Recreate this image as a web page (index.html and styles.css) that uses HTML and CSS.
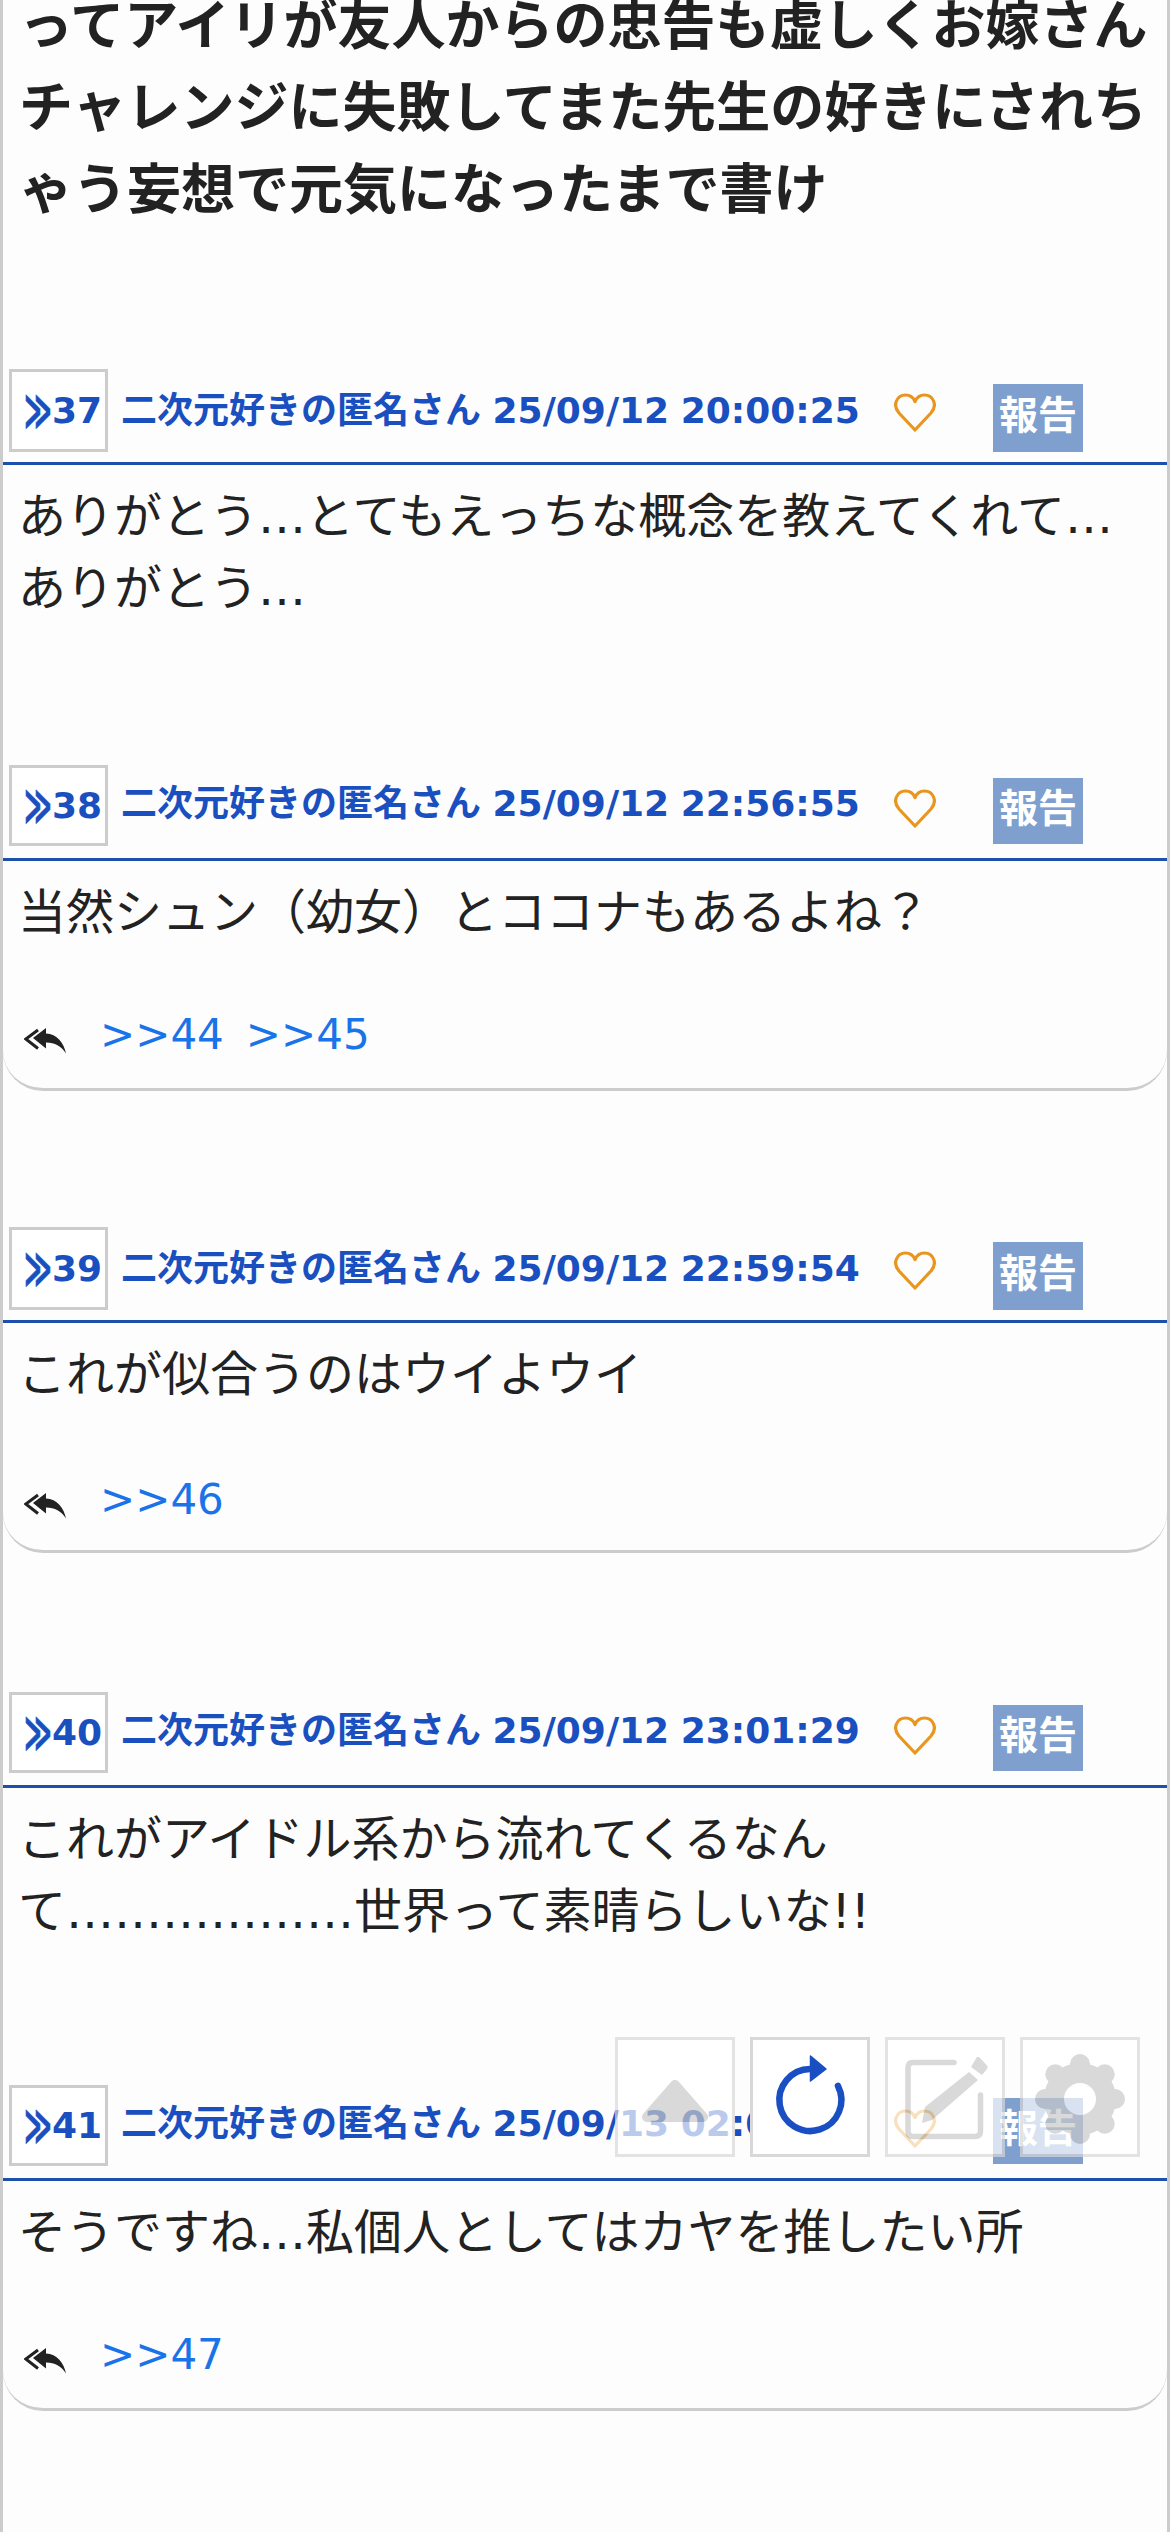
FILE: index.html
```html
<!DOCTYPE html>
<html lang="ja">
<head>
<meta charset="utf-8">
<title>スレッド</title>
<link rel="stylesheet" href="styles.css">
</head>
<body>
<svg class="defs" width="0" height="0" aria-hidden="true">
  <defs>
    <symbol id="heart" viewBox="0 0 42 39">
      <path d="M21 37 L5 20 C-2 12 3 2 11.500 2 C16 2 19.500 5 21 8.500 C22.500 5 26 2 30.500 2 C39 2 44 12 37 20 Z" fill="none" stroke="#e8961e" stroke-width="3.200" stroke-linejoin="round"/>
    </symbol>
    <symbol id="reply" viewBox="0 0 42 26">
      <path d="M14 2 L1.800 11 L14 20.500" fill="none" stroke="#222" stroke-width="3"/>
      <path d="M9 10 L22 0 L22 5.500 C33 6 40 15 42 25.500 C37 18 31 14.500 22 14.500 L22 20.500 Z" fill="#222"/>
    </symbol>
  </defs>
</svg>
<main class="thread">
  <h1 class="lead">ってアイリが友人からの忠告も虚しくお嫁さんチャレンジに失敗してまた先生の好きにされちゃう妄想で元気になったまで書け</h1>

  <article class="post post-37">
    <header class="post-head">
      <a class="num"><span class="mark">≫</span>37</a>
      <span class="meta">二次元好きの匿名さん 25/09/12 20:00:25</span>
      <svg class="heart"><use href="#heart"/></svg>
      <a class="report">報告</a>
    </header>
    <p class="body">ありがとう…とてもえっちな概念を教えてくれて…<br>ありがとう…</p>
  </article>

  <article class="post post-38 has-replies">
    <header class="post-head compact">
      <a class="num"><span class="mark">≫</span>38</a>
      <span class="meta">二次元好きの匿名さん 25/09/12 22:56:55</span>
      <svg class="heart"><use href="#heart"/></svg>
      <a class="report">報告</a>
    </header>
    <p class="body">当然シュン（幼女）とココナもあるよね？</p>
    <div class="replies">
      <svg class="reply-icon"><use href="#reply"/></svg>
      <a class="reply-link">&gt;&gt;44</a>
      <a class="reply-link">&gt;&gt;45</a>
    </div>
  </article>

  <article class="post post-39 has-replies">
    <header class="post-head">
      <a class="num"><span class="mark">≫</span>39</a>
      <span class="meta">二次元好きの匿名さん 25/09/12 22:59:54</span>
      <svg class="heart"><use href="#heart"/></svg>
      <a class="report">報告</a>
    </header>
    <p class="body">これが似合うのはウイよウイ</p>
    <div class="replies">
      <svg class="reply-icon"><use href="#reply"/></svg>
      <a class="reply-link">&gt;&gt;46</a>
    </div>
  </article>

  <article class="post post-40">
    <header class="post-head compact">
      <a class="num"><span class="mark">≫</span>40</a>
      <span class="meta">二次元好きの匿名さん 25/09/12 23:01:29</span>
      <svg class="heart"><use href="#heart"/></svg>
      <a class="report">報告</a>
    </header>
    <p class="body">これがアイドル系から流れてくるなん<br>て………………世界って素晴らしいな!!</p>
  </article>

  <article class="post post-41 has-replies">
    <header class="post-head compact">
      <a class="num"><span class="mark">≫</span>41</a>
      <span class="meta">二次元好きの匿名さん 25/09/13 02:00:41</span>
      <svg class="heart"><use href="#heart"/></svg>
      <a class="report">報告</a>
    </header>
    <p class="body">そうですね…私個人としてはカヤを推したい所</p>
    <div class="replies">
      <svg class="reply-icon"><use href="#reply"/></svg>
      <a class="reply-link">&gt;&gt;47</a>
    </div>
  </article>
</main>

<nav class="tools">
  <button class="tool dim" aria-label="上へ">
    <svg viewBox="0 0 114 114" class="tool-icon"><path d="M57 45 L29 77 L85 77 Z" fill="#c9c9c9" stroke="#c9c9c9" stroke-width="10" stroke-linejoin="round"/></svg>
  </button>
  <button class="tool" aria-label="更新">
    <svg viewBox="0 0 114 114" class="tool-icon">
      <path d="M85 46 A31 31 0 1 1 57 29" fill="none" stroke="#1a4fc4" stroke-width="6.500" stroke-linecap="round"/>
      <path d="M57.500 16 L73 29 L57.500 41 Z" fill="#1a4fc4" stroke="#1a4fc4" stroke-width="1.500" stroke-linejoin="round"/>
    </svg>
  </button>
  <button class="tool dim" aria-label="書き込み">
    <svg viewBox="0 0 114 114" class="tool-icon">
      <path d="M66 22.500 L25 22.500 Q20 22.500 20 28 L20 91 Q20 96.500 25 96.500 L87 96.500 Q92.500 96.500 92.500 91 L92.500 55" fill="none" stroke="#c9c9c9" stroke-width="5.500" stroke-linecap="round"/>
      <path d="M34 83 L37 67 L81 32 L90 40 L44 80 Z" fill="#c9c9c9"/>
      <path d="M83 27 L88.600 17.500 Q90 16 92 18 L99 25.500 Q100.500 27 99 29 L94 35 Z" fill="#c9c9c9"/>
    </svg>
  </button>
  <button class="tool dim" aria-label="設定">
    <svg viewBox="0 0 114 114" class="tool-icon">
      <circle cx="57" cy="59" r="26" fill="none" stroke="#c9c9c9" stroke-width="20"/>
      <g fill="#c9c9c9">
        <circle cx="57" cy="24" r="10"/>
        <circle cx="57" cy="94" r="10"/>
        <circle cx="22" cy="59" r="10"/>
        <circle cx="92" cy="59" r="10"/>
        <circle cx="32.300" cy="34.300" r="10"/>
        <circle cx="81.700" cy="34.300" r="10"/>
        <circle cx="32.300" cy="83.700" r="10"/>
        <circle cx="81.700" cy="83.700" r="10"/>
      </g>
    </svg>
  </button>
</nav>
</body>
</html>
```
FILE: styles.css
```css
* { box-sizing: border-box; }

html, body {
  margin: 0;
  height: 2532px;
  overflow: hidden;
  background: #fdfdfd;
}

body {
  font-family: "DejaVu Sans", "Noto Sans CJK JP", sans-serif;
  color: #222;
}

.defs { position: absolute; }

.thread {
  height: 2532px;
  border-left: 3px solid #ccc;
  border-right: 3px solid #ccc;
  overflow: hidden;
}

.lead {
  margin: -14px 0 0;
  padding: 0 10px 0 16px;
  font-size: 54px;
  line-height: 82px;
  font-weight: 700;
  line-break: anywhere;
}

.post-37 { margin-top: 137px; }
.post-38 { margin-top: 141px; }
.post-39 { margin-top: 136px; }
.post-40 { margin-top: 139px; }
.post-41 { margin-top: 138px; }

.post-head {
  display: flex;
  align-items: flex-start;
  height: 96px;
  padding: 0 0 0 6px;
  border-bottom: 3px solid #1c50ac;
}

.num {
  width: 99px;
  height: 83px;
  flex: none;
  padding-left: 12px;
  border: 3px solid #ccc;
  background: #fff;
  color: #1a4fc0;
  font-size: 36px;
  font-weight: 700;
  line-height: 77px;
  white-space: nowrap;
}

/* The double chevron is drawn narrower and taller than the font's own glyph */
.mark {
  display: inline-block;
  width: 28px;
  transform: scale(0.74, 1.35);
  transform-origin: left center;
  -webkit-text-stroke: 0.6px #1a4fc0;
}

.meta {
  margin: 18px 0 0 13px;
  width: 773px;
  flex: none;
  font-size: 36px;
  font-weight: 700;
  line-height: 48px;
  color: #1a4fc0;
  white-space: nowrap;
  word-spacing: -1px;
}

.heart {
  width: 42px;
  height: 39px;
  flex: none;
  margin: 24px 0 0 0;
}

.report {
  width: 90px;
  height: 68px;
  flex: none;
  margin: 15px 0 0 57px;
  background: #7f9fcf;
  color: #fff;
  font-size: 39px;
  font-weight: 700;
  line-height: 64px;
  text-align: center;
}

/* Headers that sit a few pixels tighter in the list */
.compact .num {
  height: 81px;
  line-height: 75px;
}

.compact .meta {
  margin-top: 15px;
}

.compact .report {
  height: 66px;
  margin-top: 13px;
  line-height: 62px;
}

.body {
  margin: 15px 0 0;
  padding: 0 15px;
  font-size: 48px;
  line-height: 72px;
}

.has-replies {
  border-bottom: 3px solid #ccc;
  border-radius: 0 0 40px 40px;
}

.replies {
  display: flex;
  align-items: center;
  gap: 22px;
  height: 140px;
  padding: 33px 0 0 21px;
}

.post-39 .replies {
  padding-top: 39px;
}

.reply-icon {
  width: 42px;
  height: 26px;
  flex: none;
  margin: 12px 12px 0 0;
}

.reply-link {
  font-size: 42px;
  line-height: 48px;
  color: #1a73e8;
}

/* Floating shortcut buttons */
.tools {
  position: fixed;
  left: 615px;
  top: 2037px;
  display: flex;
  gap: 15px;
}

.tool {
  width: 120px;
  height: 120px;
  padding: 0;
  border: 3px solid #d8d8d8;
  background: #fff;
  display: block;
}

.tool.dim {
  opacity: 0.7;
}

.tool-icon {
  display: block;
  width: 114px;
  height: 114px;
}
```
